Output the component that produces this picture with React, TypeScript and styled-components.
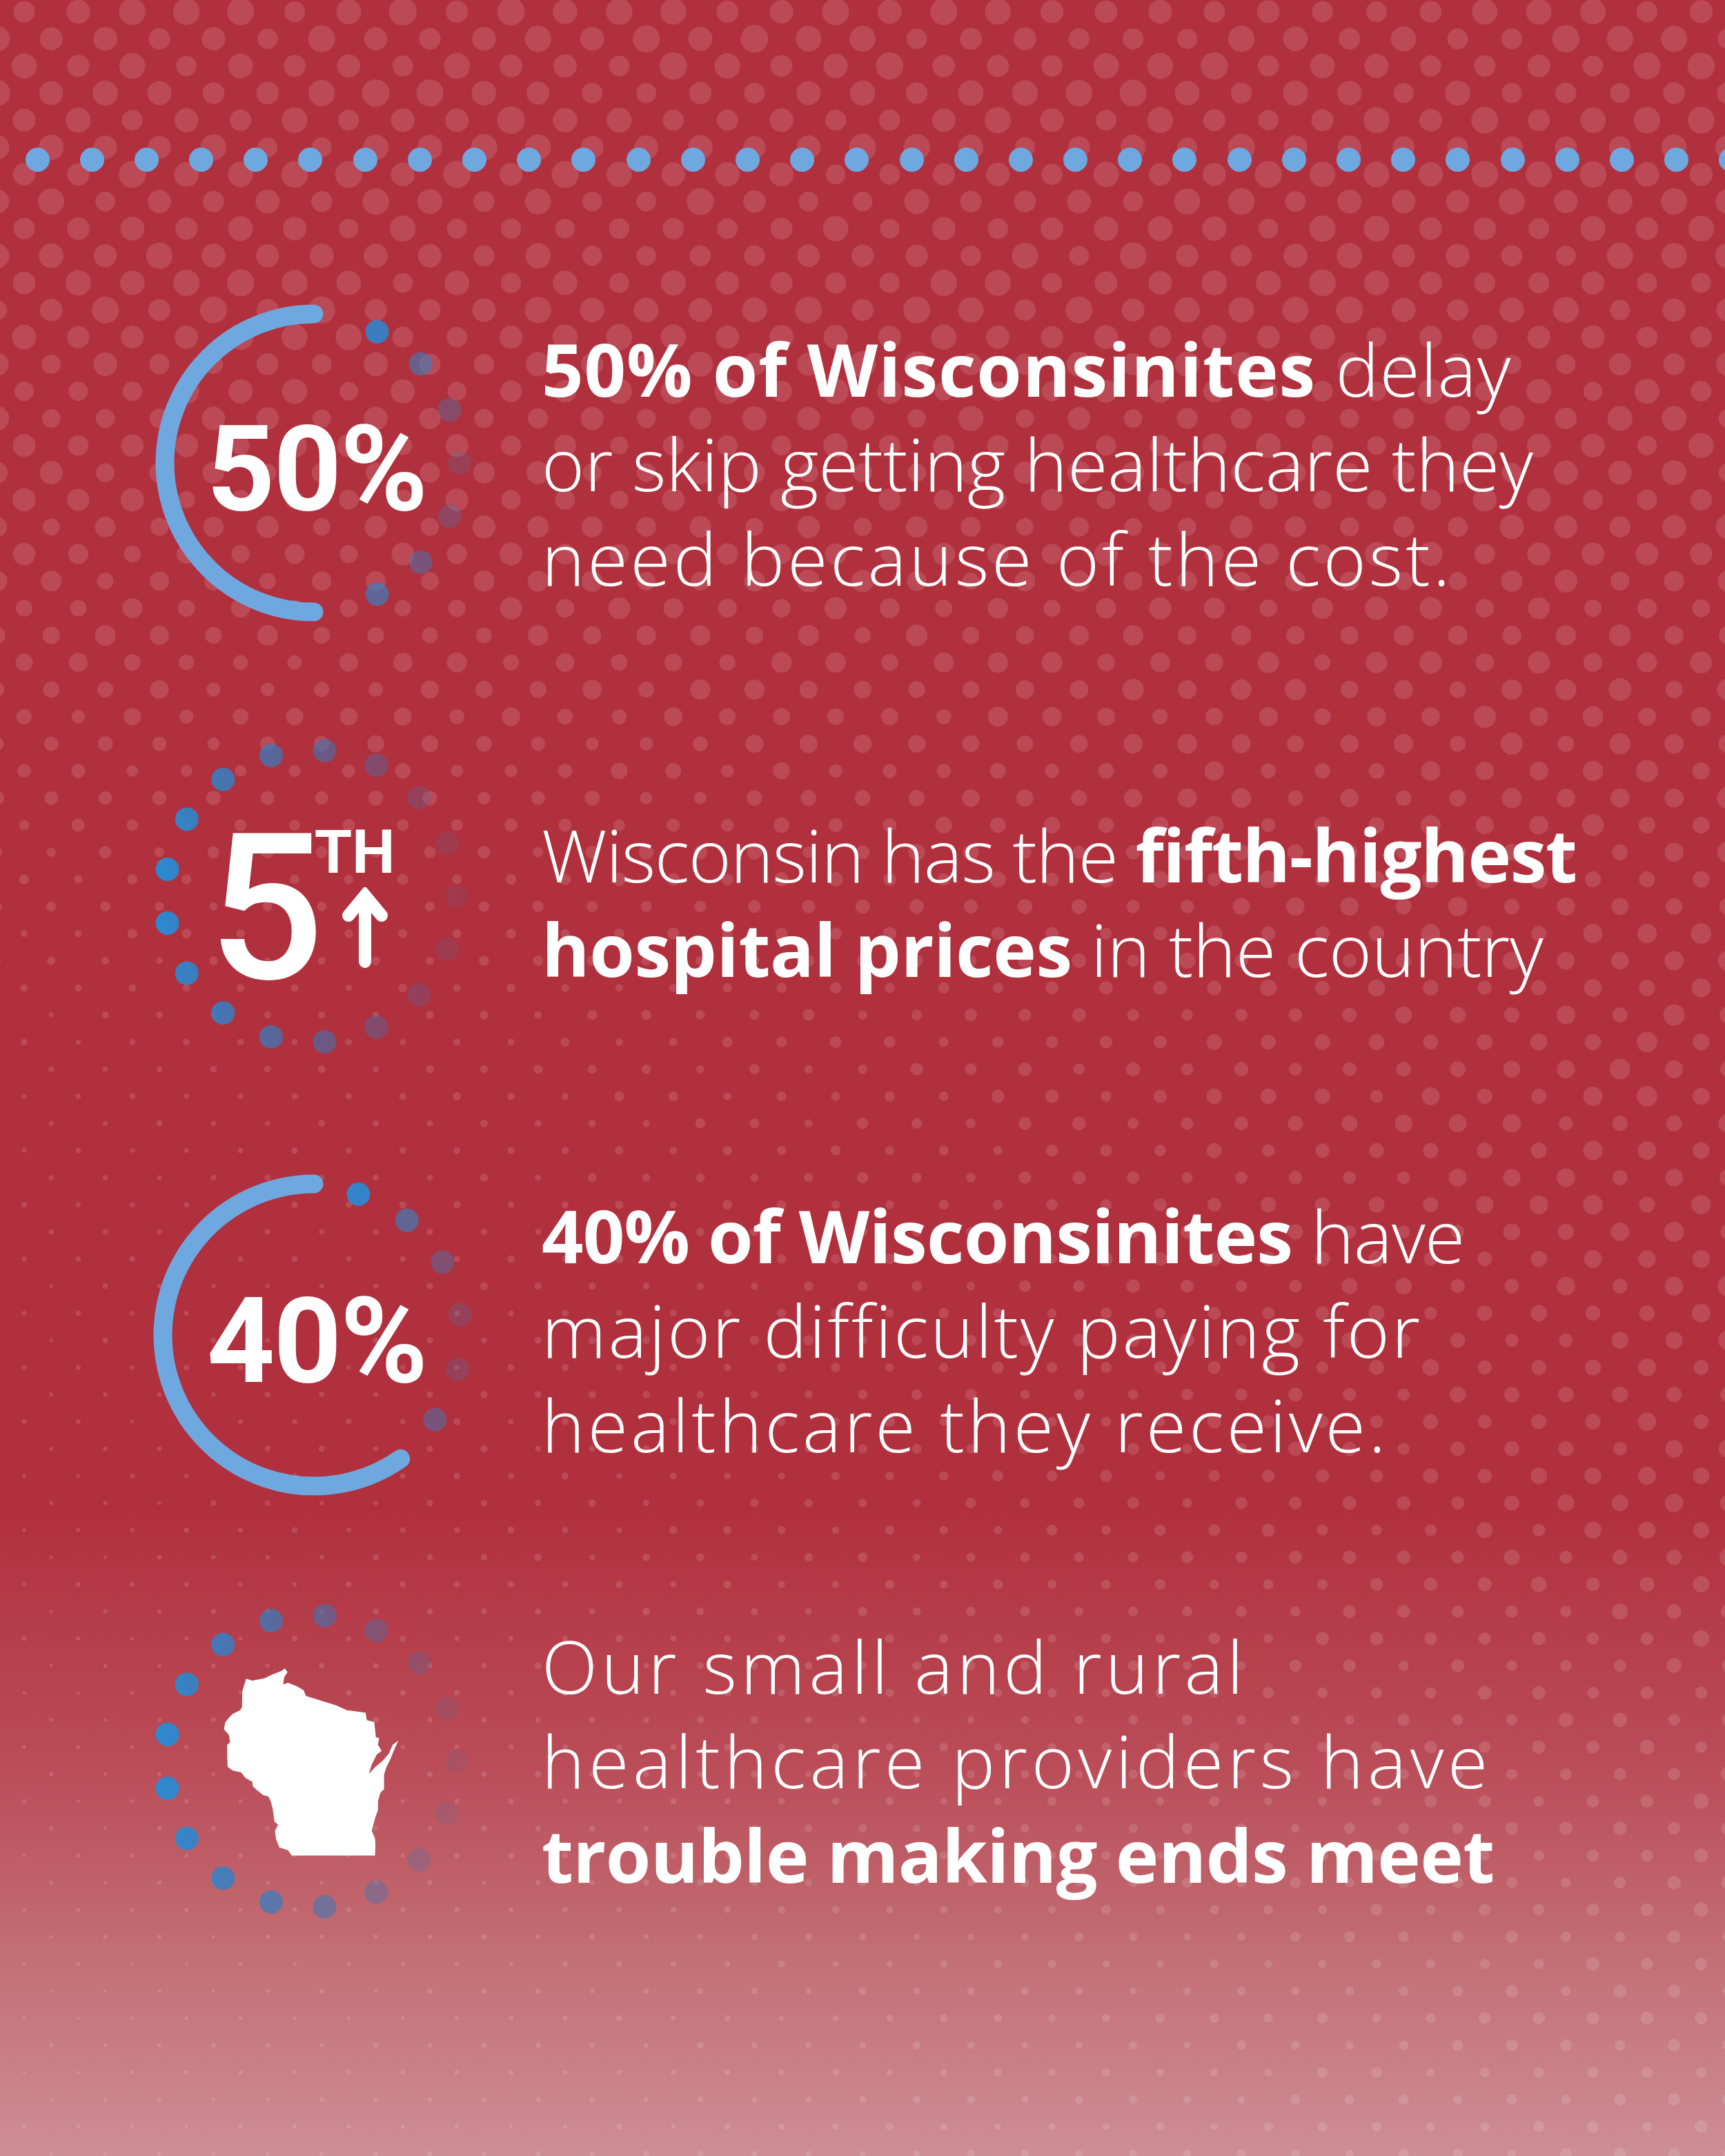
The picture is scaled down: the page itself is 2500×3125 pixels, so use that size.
import React, { useMemo } from "react";
import styled, { createGlobalStyle } from "styled-components";

const W = 2500;
const H = 3125;
const ARC = "#6fa8df";
const RING = "#2b88cf";

const GlobalStyle = createGlobalStyle`
  html, body {
    margin: 0;
    padding: 0;
    background: #b1303d;
  }
  * {
    box-sizing: border-box;
  }
`;

const Page = styled.main`
  position: relative;
  width: ${W}px;
  height: ${H}px;
  overflow: hidden;
  background: linear-gradient(
    180deg,
    #b1303d 0%,
    #b1303d 70%,
    #ba4d58 82%,
    #c47379 92%,
    #cd8e94 100%
  );
  font-family: "Open Sans", "Liberation Sans", sans-serif;
  color: #fff;
`;

const Texture = styled.svg`
  position: absolute;
  top: 0;
  left: 0;
  width: ${W}px;
  height: ${H}px;
  pointer-events: none;
`;

const Content = styled.div`
  position: relative;
  padding-top: 214px;
`;

const DotRule = styled.div`
  display: flex;
  gap: 44.2px;
  padding-left: 36.5px;
  overflow: hidden;
`;

const RuleDot = styled.span`
  flex: 0 0 35px;
  height: 35px;
  border-radius: 50%;
  background: ${ARC};
`;

const Stats = styled.section`
  margin-top: 108px;
`;

const Row = styled.article`
  display: grid;
  grid-template-columns: 520px 1fr;
  column-gap: 72px;
  align-items: center;
  height: 628px;
  padding-left: 193px;
`;

const IconBox = styled.div`
  display: grid;
  place-items: center;
  width: 520px;
  height: 520px;
  & > * {
    grid-area: 1 / 1;
  }
`;

const Art = styled.svg`
  width: 520px;
  height: 520px;
`;

const Figure = styled.span<{ $dx?: number; $dy?: number }>`
  font-family: Roboto, "Liberation Sans", sans-serif;
  font-weight: 700;
  font-size: 172px;
  line-height: 1;
  letter-spacing: -2px;
  color: #fff;
  transform: translate(${(p) => p.$dx ?? 0}px, ${(p) => p.$dy ?? 0}px);
`;

const Ordinal = styled.div`
  display: flex;
  align-items: flex-start;
  transform: translate(-16px, 14px);
`;

const BigFive = styled.span`
  margin-top: 8px;
  font-family: Roboto, "Liberation Sans", sans-serif;
  font-weight: 500;
  font-size: 296px;
  line-height: 0.71;
  letter-spacing: -18px;
  color: #fff;
`;

const Suffix = styled.div`
  display: flex;
  flex-direction: column;
  align-items: center;
  margin-left: 4px;
`;

const SuffixText = styled.span`
  font-family: Roboto, "Liberation Sans", sans-serif;
  font-weight: 700;
  font-size: 88px;
  line-height: 0.7;
  color: #fff;
`;

const Arrow = styled.svg`
  width: 66px;
  height: 118px;
  margin-top: 20px;
  margin-left: 30px;
`;

const Copy = styled.p<{ $shift?: number }>`
  margin: ${(p) => p.$shift ?? 0}px 0 0;
  font-size: 106px;
  line-height: 137px;
  font-weight: 350;
  white-space: nowrap;
`;

const Line = styled.span<{ $track?: number }>`
  display: block;
  letter-spacing: ${(p) => p.$track ?? 0}px;
`;

const Strong = styled.b`
  font-weight: 700;
`;

// halftone texture: dot diameter by height, left edge vs right edge
const LEFT: [number, number][] = [
  [0, 36],
  [450, 35],
  [900, 28],
  [1200, 17],
  [1450, 9],
  [1800, 7],
  [2400, 6],
  [3125, 5],
];
const RIGHT: [number, number][] = [
  [0, 36],
  [450, 35],
  [900, 31],
  [1400, 29],
  [2000, 27],
  [2500, 21],
  [3125, 17],
];

const interp = (stops: [number, number][], y: number) => {
  if (y <= stops[0][0]) return stops[0][1];
  for (let i = 1; i < stops.length; i++) {
    const [y1, v1] = stops[i];
    const [y0, v0] = stops[i - 1];
    if (y <= y1) return v0 + ((v1 - v0) * (y - y0)) / (y1 - y0);
  }
  return stops[stops.length - 1][1];
};

const noise = (n: number) => {
  const s = Math.sin(n * 12.9898 + 78.233) * 43758.5453;
  return s - Math.floor(s);
};

const Halftone = () => {
  const dots = useMemo(() => {
    const out: { x: number; y: number; r: number }[] = [];
    const rowH = 39.3;
    const colW = 78.4;
    for (let r = 0; 17 + r * rowH < H + 30; r++) {
      const y = 17 + r * rowH;
      const off = r % 2 ? 39.2 : 0;
      for (let c = -1; c * colW < W + 40; c++) {
        const x = 35 + off + c * colW;
        const t = Math.pow(Math.min(Math.max(x / W, 0), 1), 1.5);
        const dl = interp(LEFT, y);
        const d = dl + (interp(RIGHT, y) - dl) * t;
        const j = 0.8 + noise(r * 131 + c * 7) * 0.32;
        out.push({ x, y, r: (d * j) / 2 });
      }
    }
    return out;
  }, []);

  return (
    <Texture viewBox={`0 0 ${W} ${H}`}>
      <g fill="#fff" fillOpacity={0.13}>
        {dots.map((d, i) => (
          <circle key={i} cx={d.x} cy={d.y} r={d.r} />
        ))}
      </g>
    </Texture>
  );
};

const polar = (cx: number, cy: number, r: number, deg: number) => {
  const a = (deg * Math.PI) / 180;
  return [cx + r * Math.cos(a), cy + r * Math.sin(a)];
};

type GaugeProps = {
  cx: number;
  cy: number;
  r: number;
  end: number;
  dots: { deg: number; o: number }[];
};

const Gauge = ({ cx, cy, r, end, dots }: GaugeProps) => {
  const [ex, ey] = polar(cx, cy, r, end);
  const large = 270 - end > 180 ? 1 : 0;
  return (
    <Art viewBox="0 0 520 520">
      <path
        d={`M ${cx} ${cy - r} A ${r} ${r} 0 ${large} 0 ${ex} ${ey}`}
        fill="none"
        stroke={ARC}
        strokeWidth={27}
        strokeLinecap="round"
      />
      {dots.map((d) => {
        const [x, y] = polar(cx, cy, r - 5, d.deg);
        return <circle key={d.deg} cx={x} cy={y} r={17} fill={RING} fillOpacity={d.o} />;
      })}
    </Art>
  );
};

const Ring = ({ id, cx, cy, children }: { id: string; cx: number; cy: number; children?: React.ReactNode }) => {
  const step = 360 / 17;
  const dots = Array.from({ length: 17 }, (_, k) => polar(cx, cy, 212, -84.7 + k * step));
  return (
    <Art viewBox="0 0 520 520">
      <defs>
        <linearGradient id={id} gradientUnits="userSpaceOnUse" x1={cx - 230} y1={0} x2={cx + 230} y2={0}>
          <stop offset="0" stopColor="#2a8bd3" stopOpacity={1} />
          <stop offset="0.5" stopColor="#3479bd" stopOpacity={0.6} />
          <stop offset="1" stopColor="#4a6aa8" stopOpacity={0.1} />
        </linearGradient>
      </defs>
      <g fill={`url(#${id})`}>
        {dots.map(([x, y], i) => (
          <circle key={i} cx={x} cy={y} r={17} />
        ))}
      </g>
      {children}
    </Art>
  );
};

const WISCONSIN =
  "M495 432 L520 440 L570 430 L600 415 L640 400 L652 390 L663 405 L650 425 L645 455 L665 448 L700 462 L728 478 L738 502 L860 540 L905 560 L980 570 L985 600 L1015 608 L1022 670 L1035 672 L1030 700 L1045 725 L1025 740 L1005 780 L993 818 L1020 790 L1050 765 L1075 735 L1090 700 L1113 683 L1098 715 L1080 760 L1065 790 L1055 820 L1055 880 L1040 895 L1030 930 L1030 965 L1018 1000 L1005 1050 L1018 1080 L1020 1110 L1018 1150 L680 1150 L665 1128 L630 1117 L617 1085 L612 1050 L625 1025 L610 1012 L603 960 L595 930 L585 910 L565 905 L540 885 L522 868 L520 850 L492 835 L475 812 L442 805 L420 790 L418 745 L418 700 L430 690 L425 660 L405 637 L410 610 L425 590 L440 575 L470 560 L478 548 L480 480 Z";

const halfDots = [
  { deg: -64.3, o: 0.88 },
  { deg: -42.9, o: 0.52 },
  { deg: -21.4, o: 0.3 },
  { deg: 0, o: 0.18 },
  { deg: 21.4, o: 0.24 },
  { deg: 42.9, o: 0.42 },
  { deg: 64.3, o: 0.62 },
];

const fortyDots = [
  { deg: -72.5, o: 0.95 },
  { deg: -51, o: 0.6 },
  { deg: -29.5, o: 0.36 },
  { deg: -8, o: 0.2 },
  { deg: 13.5, o: 0.2 },
  { deg: 35, o: 0.42 },
];

export default function App() {
  return (
    <>
      <GlobalStyle />
      <Page>
        <Halftone />
        <Content>
          <DotRule>
            {Array.from({ length: 32 }, (_, i) => (
              <RuleDot key={i} />
            ))}
          </DotRule>

          <Stats>
            <Row>
              <IconBox>
                <Gauge cx={262} cy={260} r={216} end={90} dots={halfDots} />
                <Figure $dx={6} $dy={9}>50%</Figure>
              </IconBox>
              <Copy>
                <Line $track={0.9}>
                  <Strong>50% of Wisconsinites</Strong> delay
                </Line>
                <Line>or skip getting healthcare they</Line>
                <Line $track={3.9}>need because of the cost.</Line>
              </Copy>
            </Row>

            <Row>
              <IconBox>
                <Ring id="ring-fifth" cx={258} cy={260} />
                <Ordinal>
                  <BigFive>5</BigFive>
                  <Suffix>
                    <SuffixText>TH</SuffixText>
                    <Arrow viewBox="0 0 66 118">
                      <path
                        d="M33 12 V108 M9 41 L33 12 L57 41"
                        fill="none"
                        stroke="#fff"
                        strokeWidth={18}
                        strokeLinecap="round"
                        strokeLinejoin="miter"
                      />
                    </Arrow>
                  </Suffix>
                </Ordinal>
              </IconBox>
              <Copy $shift={16}>
                <Line $track={-1.4}>
                  Wisconsin has the <Strong>fifth-highest</Strong>
                </Line>
                <Line $track={-0.4}>
                  <Strong>hospital prices</Strong> in the country
                </Line>
              </Copy>
            </Row>

            <Row>
              <IconBox>
                <Gauge cx={262} cy={268} r={219} end={55} dots={fortyDots} />
                <Figure $dx={6} $dy={17}>40%</Figure>
              </IconBox>
              <Copy>
                <Line $track={-0.8}>
                  <Strong>40% of Wisconsinites</Strong> have
                </Line>
                <Line $track={2.8}>major difficulty paying for</Line>
                <Line $track={4.1}>healthcare they receive.</Line>
              </Copy>
            </Row>

            <Row>
              <IconBox>
                <Ring id="ring-state" cx={258} cy={258}>
                  <path d={WISCONSIN} fill="#fff" transform="translate(-13 -16) scale(0.357)" />
                </Ring>
              </IconBox>
              <Copy $shift={-8}>
                <Line $track={5.3}>Our small and rural</Line>
                <Line $track={5.6}>healthcare providers have</Line>
                <Line $track={-0.7}>
                  <Strong>trouble making ends meet</Strong>
                </Line>
              </Copy>
            </Row>
          </Stats>
        </Content>
      </Page>
    </>
  );
}
